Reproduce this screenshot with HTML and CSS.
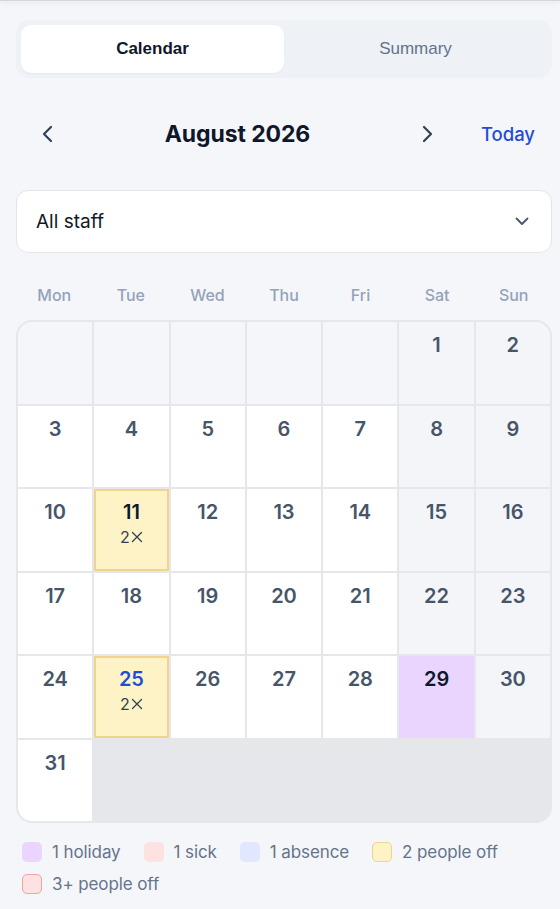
FILE: index.html
```html
<!DOCTYPE html>
<html lang="en">
<head>
    <meta charset="UTF-8"/>
    <meta name="viewport" content="width=device-width, initial-scale=1.0"/>
    <title>Team leave calendar</title>
    <link rel="stylesheet" href="styles.css">
</head>
<body>
    <div class="topbar"></div>
    <div class="page">
        <div class="tabs">
            <button class="tab active">Calendar</button>
            <button class="tab">Summary</button>
        </div>

        <div class="month-row">
            <div class="month-nav">
                <button class="nav-btn" aria-label="Previous month">
                    <svg width="14" height="18" viewBox="0 0 14 18"><path d="M10 2 L3 9 L10 16" fill="none" stroke="#334155" stroke-width="2.2" stroke-linecap="round" stroke-linejoin="round"/></svg>
                </button>
                <h1 class="month-title">August 2026</h1>
                <button class="nav-btn" aria-label="Next month">
                    <svg width="14" height="18" viewBox="0 0 14 18"><path d="M4 2 L11 9 L4 16" fill="none" stroke="#334155" stroke-width="2.2" stroke-linecap="round" stroke-linejoin="round"/></svg>
                </button>
            </div>
            <button class="today-btn">Today</button>
        </div>

        <div class="select">
            <span>All staff</span>
            <svg width="14" height="9" viewBox="0 0 14 9"><path d="M1.5 1.5 L7 7 L12.5 1.5" fill="none" stroke="#475569" stroke-width="1.8" stroke-linecap="round" stroke-linejoin="round"/></svg>
        </div>

        <div class="weekdays">
            <div>Mon</div><div>Tue</div><div>Wed</div><div>Thu</div><div>Fri</div><div>Sat</div><div>Sun</div>
        </div>

        <div class="grid">
            <div class="cell blank"></div>
            <div class="cell blank"></div>
            <div class="cell blank"></div>
            <div class="cell blank"></div>
            <div class="cell blank"></div>
            <div class="cell weekend"><span class="num">1</span></div>
            <div class="cell weekend"><span class="num">2</span></div>

            <div class="cell"><span class="num">3</span></div>
            <div class="cell"><span class="num">4</span></div>
            <div class="cell"><span class="num">5</span></div>
            <div class="cell"><span class="num">6</span></div>
            <div class="cell"><span class="num">7</span></div>
            <div class="cell weekend"><span class="num">8</span></div>
            <div class="cell weekend"><span class="num">9</span></div>

            <div class="cell"><span class="num">10</span></div>
            <div class="cell two-off">
                <span class="num dark">11</span>
                <span class="count">2<svg class="x" width="12" height="12" viewBox="0 0 12 12"><path d="M1.5 1.5 L10.5 10.5 M10.5 1.5 L1.5 10.5" stroke="#334155" stroke-width="1.3" stroke-linecap="round"/></svg></span>
            </div>
            <div class="cell"><span class="num">12</span></div>
            <div class="cell"><span class="num">13</span></div>
            <div class="cell"><span class="num">14</span></div>
            <div class="cell weekend"><span class="num">15</span></div>
            <div class="cell weekend"><span class="num">16</span></div>

            <div class="cell"><span class="num">17</span></div>
            <div class="cell"><span class="num">18</span></div>
            <div class="cell"><span class="num">19</span></div>
            <div class="cell"><span class="num">20</span></div>
            <div class="cell"><span class="num">21</span></div>
            <div class="cell weekend"><span class="num">22</span></div>
            <div class="cell weekend"><span class="num">23</span></div>

            <div class="cell"><span class="num">24</span></div>
            <div class="cell two-off">
                <span class="num today">25</span>
                <span class="count">2<svg class="x" width="12" height="12" viewBox="0 0 12 12"><path d="M1.5 1.5 L10.5 10.5 M10.5 1.5 L1.5 10.5" stroke="#334155" stroke-width="1.3" stroke-linecap="round"/></svg></span>
            </div>
            <div class="cell"><span class="num">26</span></div>
            <div class="cell"><span class="num">27</span></div>
            <div class="cell"><span class="num">28</span></div>
            <div class="cell holiday"><span class="num dark">29</span></div>
            <div class="cell weekend"><span class="num">30</span></div>

            <div class="cell"><span class="num">31</span></div>
        </div>

        <div class="legend">
            <div class="legend-item"><span class="swatch sw-holiday"></span>1 holiday</div>
            <div class="legend-item"><span class="swatch sw-sick"></span>1 sick</div>
            <div class="legend-item"><span class="swatch sw-absence"></span>1 absence</div>
            <div class="legend-item"><span class="swatch sw-two"></span>2 people off</div>
            <div class="legend-item"><span class="swatch sw-three"></span>3+ people off</div>
        </div>
    </div>
</body>
</html>
```

FILE: styles.css
```css
body {
    margin: 0;
    padding: 0;
    font-family: Inter, "Noto Sans", sans-serif;
    background: #f5f6fa;
    color: #0f172a;
}
button {
    font-family: inherit;
    border: none;
    background: none;
    padding: 0;
    cursor: pointer;
}
.topbar {
    height: 1px;
    background: #d4d6da;
    box-shadow: 0 1px 5px rgba(0,0,0,0.18);
}
.page {
    width: 536px;
    margin-left: 16px;
    padding-top: 19px;
}

/* tabs */
.tabs {
    display: flex;
    padding: 5px;
    background: #eef1f6;
    border-radius: 14px;
}
.tab {
    flex: 1;
    height: 48px;
    border-radius: 10px;
    font-family: "Liberation Sans", Arial, sans-serif;
    font-size: 17px;
    font-weight: 500;
    color: #64748b;
}
.tab.active {
    background: #fff;
    color: #0f172a;
    font-weight: 600;
    box-shadow: 0 1px 2px rgba(15,23,42,0.04);
}

/* month header */
.month-row {
    display: flex;
    align-items: center;
    height: 40px;
    margin-top: 36px;
    padding: 0 17px 0 12px;
}
.month-nav {
    flex: 1;
    display: flex;
    align-items: center;
}
.nav-btn {
    width: 40px;
    height: 40px;
    display: flex;
    align-items: center;
    justify-content: center;
}
.month-title {
    flex: 1;
    margin: 0;
    text-align: center;
    font-size: 23px;
    font-weight: 700;
    letter-spacing: -0.1px;
}
.today-btn {
    margin-left: 34px;
    font-size: 18.5px;
    font-weight: 500;
    color: #1d4ed8;
}

/* staff select */
.select {
    margin-top: 36px;
    height: 63px;
    box-sizing: border-box;
    display: flex;
    align-items: center;
    justify-content: space-between;
    padding: 0 22px 0 19px;
    background: #fff;
    border: 1px solid #e2e5ea;
    border-radius: 12px;
    font-size: 19px;
    color: #111827;
}

/* weekday labels */
.weekdays {
    display: grid;
    grid-template-columns: repeat(7, 1fr);
    margin-top: 32px;
    height: 20px;
    line-height: 20px;
    text-align: center;
    font-size: 16px;
    font-weight: 500;
    color: #94a3b8;
}

/* month grid */
.grid {
    display: grid;
    grid-template-columns: repeat(7, 1fr);
    grid-auto-rows: 81.5px;
    gap: 2px;
    margin-top: 15px;
    background: #e5e7eb;
    border: 2px solid #e5e7eb;
    border-radius: 16px;
    overflow: hidden;
}
.cell {
    background: #fff;
    display: flex;
    flex-direction: column;
    align-items: center;
    padding-top: 11px;
    box-sizing: border-box;
}
.cell.blank { background: #f5f6fa; }
.cell.weekend { background: #f3f5f9; }
.cell.holiday { background: #e9d5ff; }
.cell.two-off {
    background: #fef3c7;
    border: 2px solid #efd48b;
    padding-top: 9px;
}
.num {
    font-size: 20px;
    font-weight: 600;
    line-height: 24px;
    color: #475569;
}
.num.dark { color: #0f172a; }
.num.today { color: #1d4ed8; }
.count {
    display: flex;
    align-items: center;
    gap: 1px;
    margin-top: 3px;
    font-size: 16px;
    line-height: 20px;
    color: #334155;
}
.count .x {
    display: block;
}

/* legend */
.legend {
    display: flex;
    flex-wrap: wrap;
    gap: 8px 23px;
    margin-top: 17px;
    padding-left: 6px;
}
.legend-item {
    display: flex;
    align-items: center;
    gap: 10px;
    height: 24px;
    font-size: 17px;
    letter-spacing: -0.1px;
    color: #64748b;
}
.swatch {
    width: 20px;
    height: 20px;
    border-radius: 5px;
    box-sizing: border-box;
}
.sw-holiday { background: #e9d5ff; }
.sw-sick { background: #fee2e2; }
.sw-absence { background: #e0e7ff; }
.sw-two { background: #fef3c7; border: 1.5px solid #efd48b; }
.sw-three { background: #fee2e2; border: 1.5px solid #f4a4a4; }
```
